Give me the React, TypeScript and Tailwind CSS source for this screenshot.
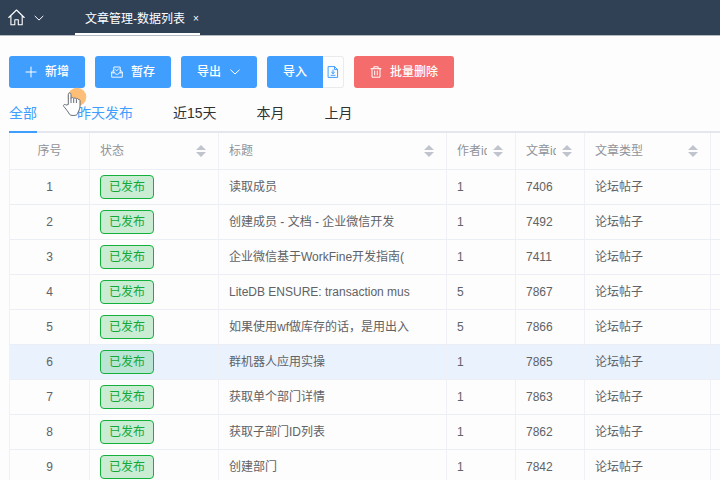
import type { ReactNode } from 'react';

interface Article {
  title: string;
  authorId: number;
  articleId: number;
}

const articles: Article[] = [
  { title: '读取成员', authorId: 1, articleId: 7406 },
  { title: '创建成员 - 文档 - 企业微信开发', authorId: 1, articleId: 7492 },
  { title: '企业微信基于WorkFine开发指南(', authorId: 1, articleId: 7411 },
  { title: 'LiteDB ENSURE: transaction mus', authorId: 5, articleId: 7867 },
  { title: '如果使用wf做库存的话，是用出入', authorId: 5, articleId: 7866 },
  { title: '群机器人应用实操', authorId: 1, articleId: 7865 },
  { title: '获取单个部门详情', authorId: 1, articleId: 7863 },
  { title: '获取子部门ID列表', authorId: 1, articleId: 7862 },
  { title: '创建部门', authorId: 1, articleId: 7842 },
];

const HOVERED_ROW = 5;

const filters = ['全部', '昨天发布', '近15天', '本月', '上月'];

const Icon = ({ children, className = 'size-3' }: { children: ReactNode; className?: string }) => (
  <svg
    viewBox="0 0 12 12"
    fill="none"
    stroke="currentColor"
    strokeLinecap="round"
    strokeLinejoin="round"
    className={`shrink-0 ${className}`}
    aria-hidden="true"
  >
    {children}
  </svg>
);

const ToolButton = ({ danger = false, children }: { danger?: boolean; children: ReactNode }) => (
  <button
    type="button"
    className={`flex h-8 items-center gap-2 rounded-[3px] px-4 text-white ${
      danger ? 'bg-[#f56c6c]' : 'bg-[#409eff]'
    }`}
  >
    {children}
  </button>
);

const SortArrows = () => (
  <svg viewBox="0 0 10 12" className="h-3 w-2.5 shrink-0 fill-[#c0c4cc]" aria-hidden="true">
    <path d="M5 0l5 5H0zM5 12l5-5H0z" />
  </svg>
);

const HeaderCell = ({ label, sortable = true }: { label: string; sortable?: boolean }) => (
  <th
    scope="col"
    className="border-r border-b border-r-[#eff1f7] border-b-[#ebeef5] pr-3 pl-2.5 text-left font-normal"
  >
    <div className="flex items-center justify-between gap-1.5">
      <span className="overflow-hidden whitespace-nowrap">{label}</span>
      {sortable && <SortArrows />}
    </div>
  </th>
);

const Cell = ({ center = false, children }: { center?: boolean; children: ReactNode }) => (
  <td
    className={`overflow-hidden border-r border-b border-r-[#eff1f7] border-b-[#ebeef5] px-2.5 whitespace-nowrap ${
      center ? 'text-center' : ''
    }`}
  >
    {children}
  </td>
);

// Курсор-рука с подсветкой клика
const Pointer = () => (
  <div className="pointer-events-none absolute top-[87px] left-[62px]">
    <svg width="26" height="30" viewBox="0 0 26 30" aria-hidden="true">
      <circle cx="15" cy="10" r="9.3" fill="#fdbe78" />
      <path
        d="M6.300 17.500V7.300c0-1.800 2.700-1.800 2.700 0v4c.3-1.100 2.500-1 2.700.3.400-1 2.500-.8 2.700.5.500-.9 2-.7 2.200.5.600-.3 1.400.1 1.400 1v5.500c0 2-.6 3.400-1.200 4.600l-1 2.300c-.5 1.300-1 2-2 2.200-1.500.400-3.800.400-5 0-1.100-.4-1.600-1.200-2.100-2.300-.9-1.700-2.400-3.300-3.600-4.900-1-1.300-1.900-1.900-1.600-2.700.4-1.100 1.700-1 2.600-.2z"
        fill="#fff"
        stroke="#666d77"
        strokeLinejoin="round"
      />
      <path d="M9 11v5M11.700 11.600v4.400M14.400 12.200v3.800" stroke="#666d77" />
    </svg>
  </div>
);

export default function App() {
  return (
    <div className="relative h-screen overflow-hidden bg-[#fdfdfd] font-['Liberation_Sans','Noto_Sans_CJK_SC',sans-serif] text-xs text-[#606266]">
      <header className="flex h-[35px] bg-[#304156] pl-2 text-white shadow-[0_1px_0_#b4b9c2]">
        <button type="button" aria-label="首页" className="flex items-center">
          <svg viewBox="0 0 17 17" fill="none" stroke="currentColor" className="size-[17px]">
            <path
              d="M.8 8.500L8.500 1l7.700 7.500M2.900 7v8.700H6.800V10.800h3.500v4.900h3.900V7"
              strokeWidth="1.100"
              strokeLinejoin="round"
              strokeLinecap="round"
            />
          </svg>
        </button>
        <button type="button" aria-label="展开" className="ml-2 flex items-center">
          <Icon>
            <path d="M2 4.200l4 3.900 4-3.900" />
          </Icon>
        </button>
        <div className="ml-[30px] flex items-center gap-2 border-b-2 border-white pt-1 pr-px pl-2.5">
          <span>文章管理-数据列表</span>
          <button type="button" aria-label="关闭" className="text-[10px]">
            ×
          </button>
        </div>
      </header>

      <main className="pl-[9px]">
        <div className="flex gap-2.5 pt-[21px] font-medium">
          <ToolButton>
            <Icon>
              <path d="M6 1v10M1 6h10" />
            </Icon>
            新增
          </ToolButton>
          <ToolButton>
            <Icon>
              <path
                d="M2.800 4.200L.7 5.800v5.400h10.600V5.800L9.200 4.200M2.800 6.800V1h6.400v5.800M.7 6.800h3.200c.2 2 4 2 4.200 0h3.200M4.500 3.700l1.200 1.100 1.900-2"
                strokeWidth="0.900"
              />
            </Icon>
            暂存
          </ToolButton>
          <ToolButton>
            导出
            <Icon>
              <path d="M1.700 4L6 8l4.300-4" />
            </Icon>
          </ToolButton>
          <div className="flex h-8">
            <button type="button" className="rounded-l-[3px] bg-[#409eff] px-4 text-white">
              导入
            </button>
            <button
              type="button"
              aria-label="下载模板"
              className="flex items-center rounded-r-[3px] border border-l-0 border-[#ebebeb] px-1 text-[#409eff]"
            >
              <Icon>
                <path d="M1.500.6h6L10.600 3.600v7.800H1.500zM7.500.6v3h3.100M6 4v3.500M4.500 6.200L6 7.600l1.500-1.400M4 9.300h4" />
              </Icon>
            </button>
          </div>
          <ToolButton danger>
            <Icon>
              <path d="M1 2.700h10M3.800 2.500V.8h4.400v1.700M2 2.700v8.500h8V2.700M4.700 5v3.900M7.300 5v3.900" />
            </Icon>
            批量删除
          </ToolButton>
        </div>

        <nav className="mt-1 flex h-[41px] gap-10 border-b-2 border-[#e4e7ed] text-sm text-[#303133]">
          {filters.map((name, i) => (
            <button
              key={name}
              type="button"
              className={`-mb-0.5 border-b-2 pt-0.5 ${
                i === 0 ? 'border-[#409eff] text-[#409eff]' : 'border-transparent'
              } ${i === 1 ? 'text-[#409eff]' : ''}`}
            >
              {name}
            </button>
          ))}
        </nav>

        <table className="w-full table-fixed border-separate border-spacing-0 border-l border-[#eff1f7]">
          <colgroup>
            <col className="w-20" />
            <col className="w-[129px]" />
            <col className="w-[228px]" />
            <col className="w-[69px]" />
            <col className="w-[69px]" />
            <col className="w-[126px]" />
            <col />
          </colgroup>
          <thead className="text-[#909399]">
            <tr className="h-[37px]">
              <th scope="col" className="border-r border-b border-r-[#eff1f7] border-b-[#ebeef5] font-normal">
                序号
              </th>
              <HeaderCell label="状态" />
              <HeaderCell label="标题" />
              <HeaderCell label="作者id" />
              <HeaderCell label="文章id" />
              <HeaderCell label="文章类型" />
              <th className="border-b border-[#ebeef5]" />
            </tr>
          </thead>
          <tbody>
            {articles.map((article, i) => (
              <tr key={article.articleId} className={`h-[35px] ${i === HOVERED_ROW ? 'bg-[#eaf2fe]' : ''}`}>
                <Cell center>{i + 1}</Cell>
                <Cell>
                  <span className="inline-flex h-6 items-center rounded-[4px] border border-[#13b13c] bg-[#13b13c]/22 px-2 align-middle text-[#13a83a]">
                    已发布
                  </span>
                </Cell>
                <Cell>{article.title}</Cell>
                <Cell>{article.authorId}</Cell>
                <Cell>{article.articleId}</Cell>
                <Cell>论坛帖子</Cell>
                <td className="border-b border-[#ebeef5]" />
              </tr>
            ))}
          </tbody>
        </table>
      </main>

      <Pointer />
    </div>
  );
}
